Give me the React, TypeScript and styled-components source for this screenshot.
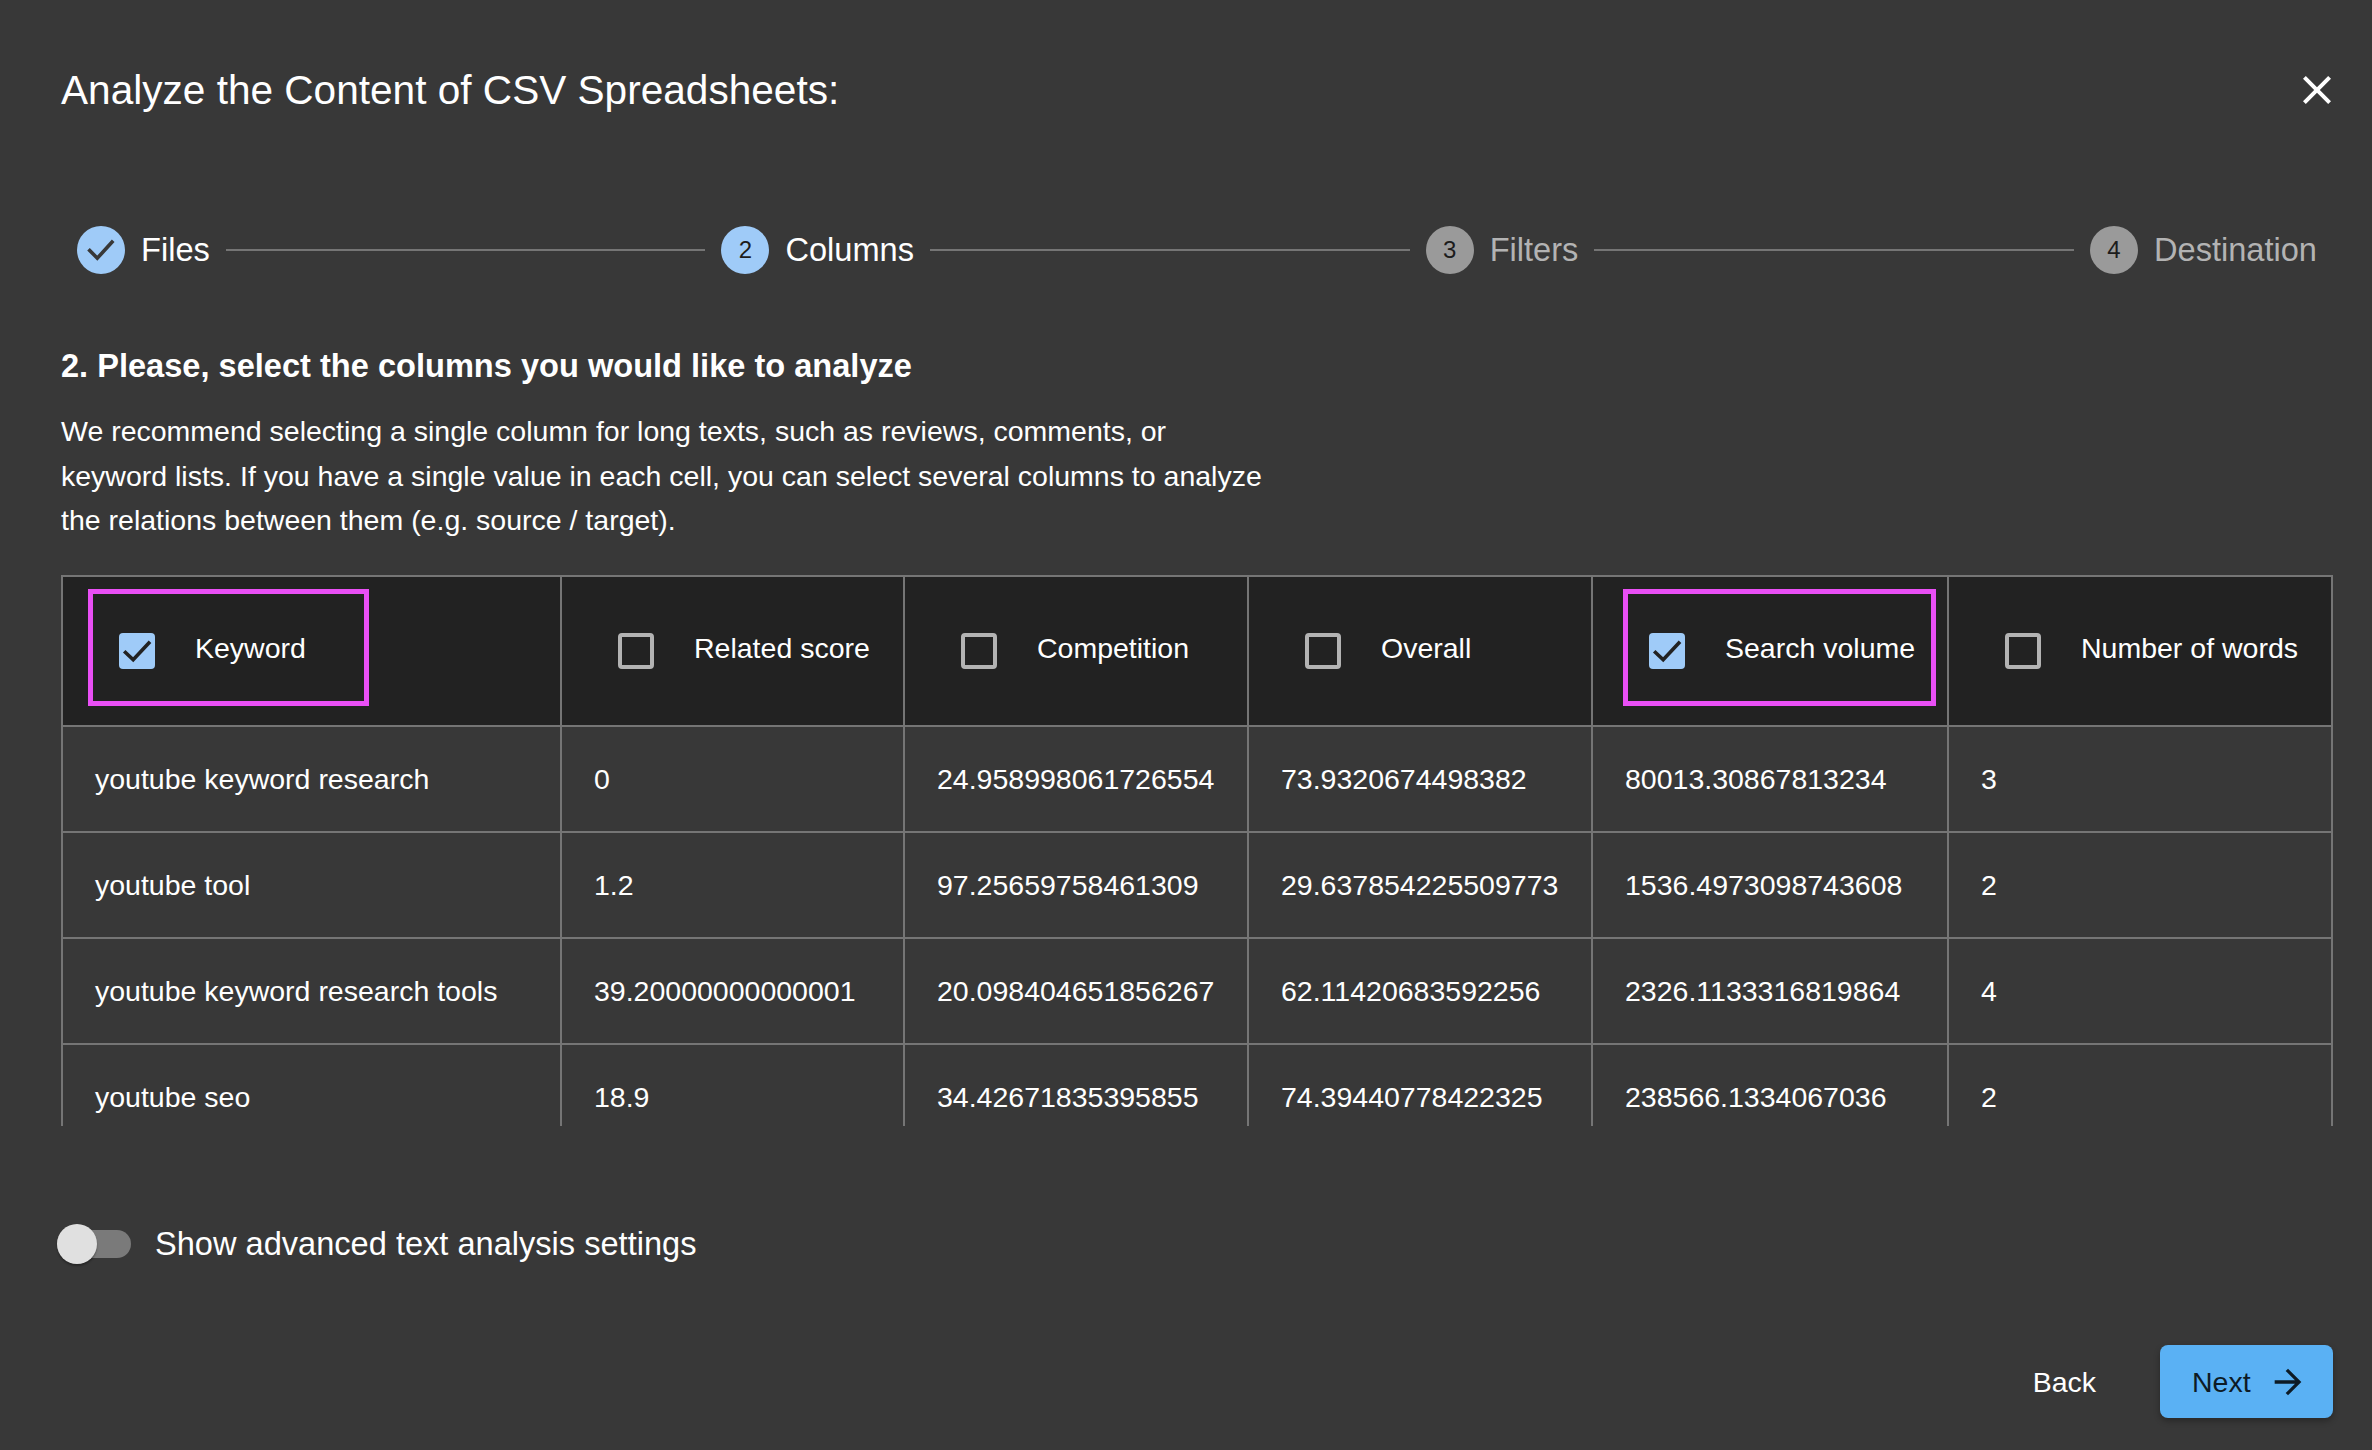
import { FC } from 'react';
import styled, { createGlobalStyle } from 'styled-components';

const COLUMNS = [
  { title: 'Keyword', width: 499, checked: true, highlight: { left: 25, width: 281 } },
  { title: 'Related score', width: 343 },
  { title: 'Competition', width: 344 },
  { title: 'Overall', width: 344 },
  { title: 'Search volume', width: 356, checked: true, highlight: { left: 30, width: 313 } },
  { title: 'Number of words', width: 384 },
];

const ROWS = [
  ['youtube keyword research', '0', '24.958998061726554', '73.9320674498382', '80013.30867813234', '3'],
  ['youtube tool', '1.2', '97.25659758461309', '29.637854225509773', '1536.4973098743608', '2'],
  ['youtube keyword research tools', '39.20000000000001', '20.098404651856267', '62.11420683592256', '2326.1133316819864', '4'],
  ['youtube seo', '18.9', '34.42671835395855', '74.39440778422325', '238566.1334067036', '2'],
];

const STEPS = [
  { label: 'Files', state: 'done' },
  { label: 'Columns', state: 'active' },
  { label: 'Filters', state: 'idle' },
  { label: 'Destination', state: 'idle' },
];

export default function App() {
  return (
    <>
      <GlobalStyle />
      <Dialog>
        <Header>
          <Title>Analyze the Content of CSV Spreadsheets:</Title>
          <CloseButton aria-label="Close">
            <svg width="48" height="48" viewBox="0 0 24 24" fill="#fff">
              <path d="M19 6.41 17.59 5 12 10.59 6.41 5 5 6.41 10.59 12 5 17.59 6.41 19 12 13.41 17.59 19 19 17.59 13.41 12z" />
            </svg>
          </CloseButton>
        </Header>

        <Stepper>
          {STEPS.map((step, index) => (
            <StepGroup key={step.label} $last={index === STEPS.length - 1}>
              <Step>
                <StepIcon step={index + 1} state={step.state} />
                <StepLabel $muted={step.state === 'idle'}>{step.label}</StepLabel>
              </Step>
              {index < STEPS.length - 1 && <Connector />}
            </StepGroup>
          ))}
        </Stepper>

        <Heading>2. Please, select the columns you would like to analyze</Heading>
        <Description>
          We recommend selecting a single column for long texts, such as reviews, comments, or
          keyword lists. If you have a single value in each cell, you can select several columns to
          analyze the relations between them (e.g. source / target).
        </Description>

        <TableWrapper>
          <Table>
            <colgroup>
              {COLUMNS.map((column) => (
                <col key={column.title} width={column.width} />
              ))}
            </colgroup>
            <thead>
              <tr>
                {COLUMNS.map((column) => (
                  <HeadCell key={column.title}>
                    <HeadContent>
                      <Checkbox $checked={!!column.checked}>
                        {column.checked && (
                          <svg width="36" height="36" viewBox="0 0 36 36" fill="none">
                            <path d="M5.2 18.2l9 8.6L31 8.8" stroke="#222" strokeWidth="3.6" />
                          </svg>
                        )}
                      </Checkbox>
                      <HeadLabel>{column.title}</HeadLabel>
                    </HeadContent>
                    {column.highlight && (
                      <Highlight $left={column.highlight.left} $width={column.highlight.width} />
                    )}
                  </HeadCell>
                ))}
              </tr>
            </thead>
            <tbody>
              {ROWS.map((row) => (
                <tr key={row[0]}>
                  {row.map((value, index) => (
                    <Cell key={index}>{value}</Cell>
                  ))}
                </tr>
              ))}
            </tbody>
          </Table>
        </TableWrapper>

        <SwitchRow>
          <Switch>
            <SwitchKnob />
          </Switch>
          <SwitchLabel>Show advanced text analysis settings</SwitchLabel>
        </SwitchRow>

        <Footer>
          <BackButton>Back</BackButton>
          <NextButton>
            <span>Next</span>
            <svg width="40" height="40" viewBox="0 0 24 24" fill="#0d1b26">
              <path d="m12 4-1.41 1.41L16.17 11H4v2h12.17l-5.58 5.59L12 20l8-8z" />
            </svg>
          </NextButton>
        </Footer>
      </Dialog>
    </>
  );
}

const StepIcon: FC<{ step: number; state: string }> = ({ step, state }) => (
  <StepCircle $idle={state === 'idle'}>
    {state === 'done' ? (
      <svg width="48" height="48" viewBox="0 0 48 48" fill="none">
        <path d="M11.5 23.2l8.8 9L36.2 14.8" stroke="#383838" strokeWidth="3.6" />
      </svg>
    ) : (
      step
    )}
  </StepCircle>
);

const GlobalStyle = createGlobalStyle`
  html, body {
    margin: 0;
    background: #383838;
  }

  body {
    font-family: "Liberation Sans", Arial, sans-serif;
    color: #fff;
  }
`;

const Dialog = styled.div`
  display: flex;
  flex-direction: column;
  box-sizing: border-box;
  width: 2372px;
  height: 1450px;
  padding: 66px 39px 32px 61px;
`;

const Header = styled.header`
  display: flex;
  align-items: center;
  justify-content: space-between;
  height: 48px;
`;

const Title = styled.h1`
  margin: 0;
  font-size: 40.6px;
  font-weight: 400;
  line-height: 48px;
`;

const CloseButton = styled.button`
  display: flex;
  margin-right: -8px;
  padding: 0;
  background: none;
  border: 0;
`;

const Stepper = styled.div`
  display: flex;
  align-items: center;
  margin-top: 112px;
`;

const StepGroup = styled.div<{ $last: boolean }>`
  display: flex;
  flex: ${({ $last }) => ($last ? '0 0 auto' : '1 1 auto')};
  align-items: center;
`;

const Step = styled.div`
  display: flex;
  align-items: center;
  gap: 16px;
  padding: 0 16px;
`;

const StepCircle = styled.span<{ $idle: boolean }>`
  display: flex;
  align-items: center;
  justify-content: center;
  width: 48px;
  height: 48px;
  font-size: 24px;
  color: #1c1c1c;
  background: ${({ $idle }) => ($idle ? '#9a9a9a' : '#9fcbf8')};
  border-radius: 50%;
`;

const StepLabel = styled.span<{ $muted: boolean }>`
  font-size: 32.6px;
  line-height: 48px;
  color: ${({ $muted }) => ($muted ? '#b3b3b3' : '#fff')};
`;

const Connector = styled.span`
  flex: 1;
  height: 2px;
  background: #757575;
`;

const Heading = styled.h2`
  margin: 72px 0 0;
  font-size: 32.6px;
  font-weight: 700;
  line-height: 40px;
`;

const Description = styled.p`
  width: 1205px;
  margin: 23px 0 0;
  font-size: 28.5px;
  line-height: 44.5px;
`;

const TableWrapper = styled.div`
  box-sizing: border-box;
  width: 2272px;
  height: 551px;
  margin-top: 32px;
  overflow: hidden;
  border-top: 2px solid #757575;
  border-left: 2px solid #757575;
`;

const Table = styled.table`
  width: 2270px;
  table-layout: fixed;
  border-spacing: 0;
`;

const HeadCell = styled.th`
  position: relative;
  box-sizing: border-box;
  height: 150px;
  padding: 0;
  font-weight: 400;
  text-align: left;
  background: #222;
  border-right: 2px solid #757575;
  border-bottom: 2px solid #757575;
`;

const HeadContent = styled.div`
  display: flex;
  align-items: center;
  gap: 40px;
  padding-left: 56px;
`;

const Checkbox = styled.span<{ $checked: boolean }>`
  display: block;
  flex: none;
  box-sizing: border-box;
  width: 36px;
  height: 36px;
  background: ${({ $checked }) => ($checked ? '#9fcbf8' : 'transparent')};
  border: ${({ $checked }) => ($checked ? '0' : '4px solid #b3b3b3')};
  border-radius: 4px;

  svg {
    display: block;
  }
`;

const HeadLabel = styled.span`
  margin-top: -6px;
  font-size: 28.5px;
  line-height: 40px;
  white-space: nowrap;
`;

const Highlight = styled.span<{ $left: number; $width: number }>`
  position: absolute;
  top: 12px;
  left: ${({ $left }) => $left}px;
  box-sizing: border-box;
  width: ${({ $width }) => $width}px;
  height: 117px;
  border: 5px solid #e94ff5;
`;

const Cell = styled.td`
  box-sizing: border-box;
  height: 106px;
  padding: 1px 0 0 32px;
  font-size: 28.5px;
  line-height: 40px;
  white-space: nowrap;
  border-right: 2px solid #757575;
  border-bottom: 2px solid #757575;
`;

const SwitchRow = styled.div`
  display: flex;
  align-items: center;
  gap: 24px;
  margin: 98px 0 0 -4px;
`;

const Switch = styled.span`
  position: relative;
  display: block;
  width: 74px;
  height: 28px;
  background: #7a7a7a;
  border-radius: 14px;
`;

const SwitchKnob = styled.span`
  position: absolute;
  top: -6px;
  left: 0;
  width: 40px;
  height: 40px;
  background: #e0e0e0;
  border-radius: 50%;
  box-shadow: 0 2px 2px rgba(0, 0, 0, 0.3);
`;

const SwitchLabel = styled.span`
  font-size: 32.6px;
  line-height: 40px;
`;

const Footer = styled.footer`
  display: flex;
  align-items: center;
  justify-content: flex-end;
  gap: 32px;
  margin-top: auto;
`;

const BackButton = styled.button`
  height: 73px;
  padding: 2px 32px 0;
  font-family: inherit;
  font-size: 28.5px;
  color: #fff;
  background: none;
  border: 0;
`;

const NextButton = styled.button`
  display: flex;
  align-items: center;
  gap: 17px;
  box-sizing: border-box;
  width: 173px;
  height: 73px;
  padding: 0 0 0 32px;
  font-family: inherit;
  font-size: 28.5px;
  color: #0d1b26;
  background: #5ab1f4;
  border: 0;
  border-radius: 8px;
  box-shadow: 0 3px 6px rgba(0, 0, 0, 0.3);

  span {
    padding-top: 2px;
  }
`;
